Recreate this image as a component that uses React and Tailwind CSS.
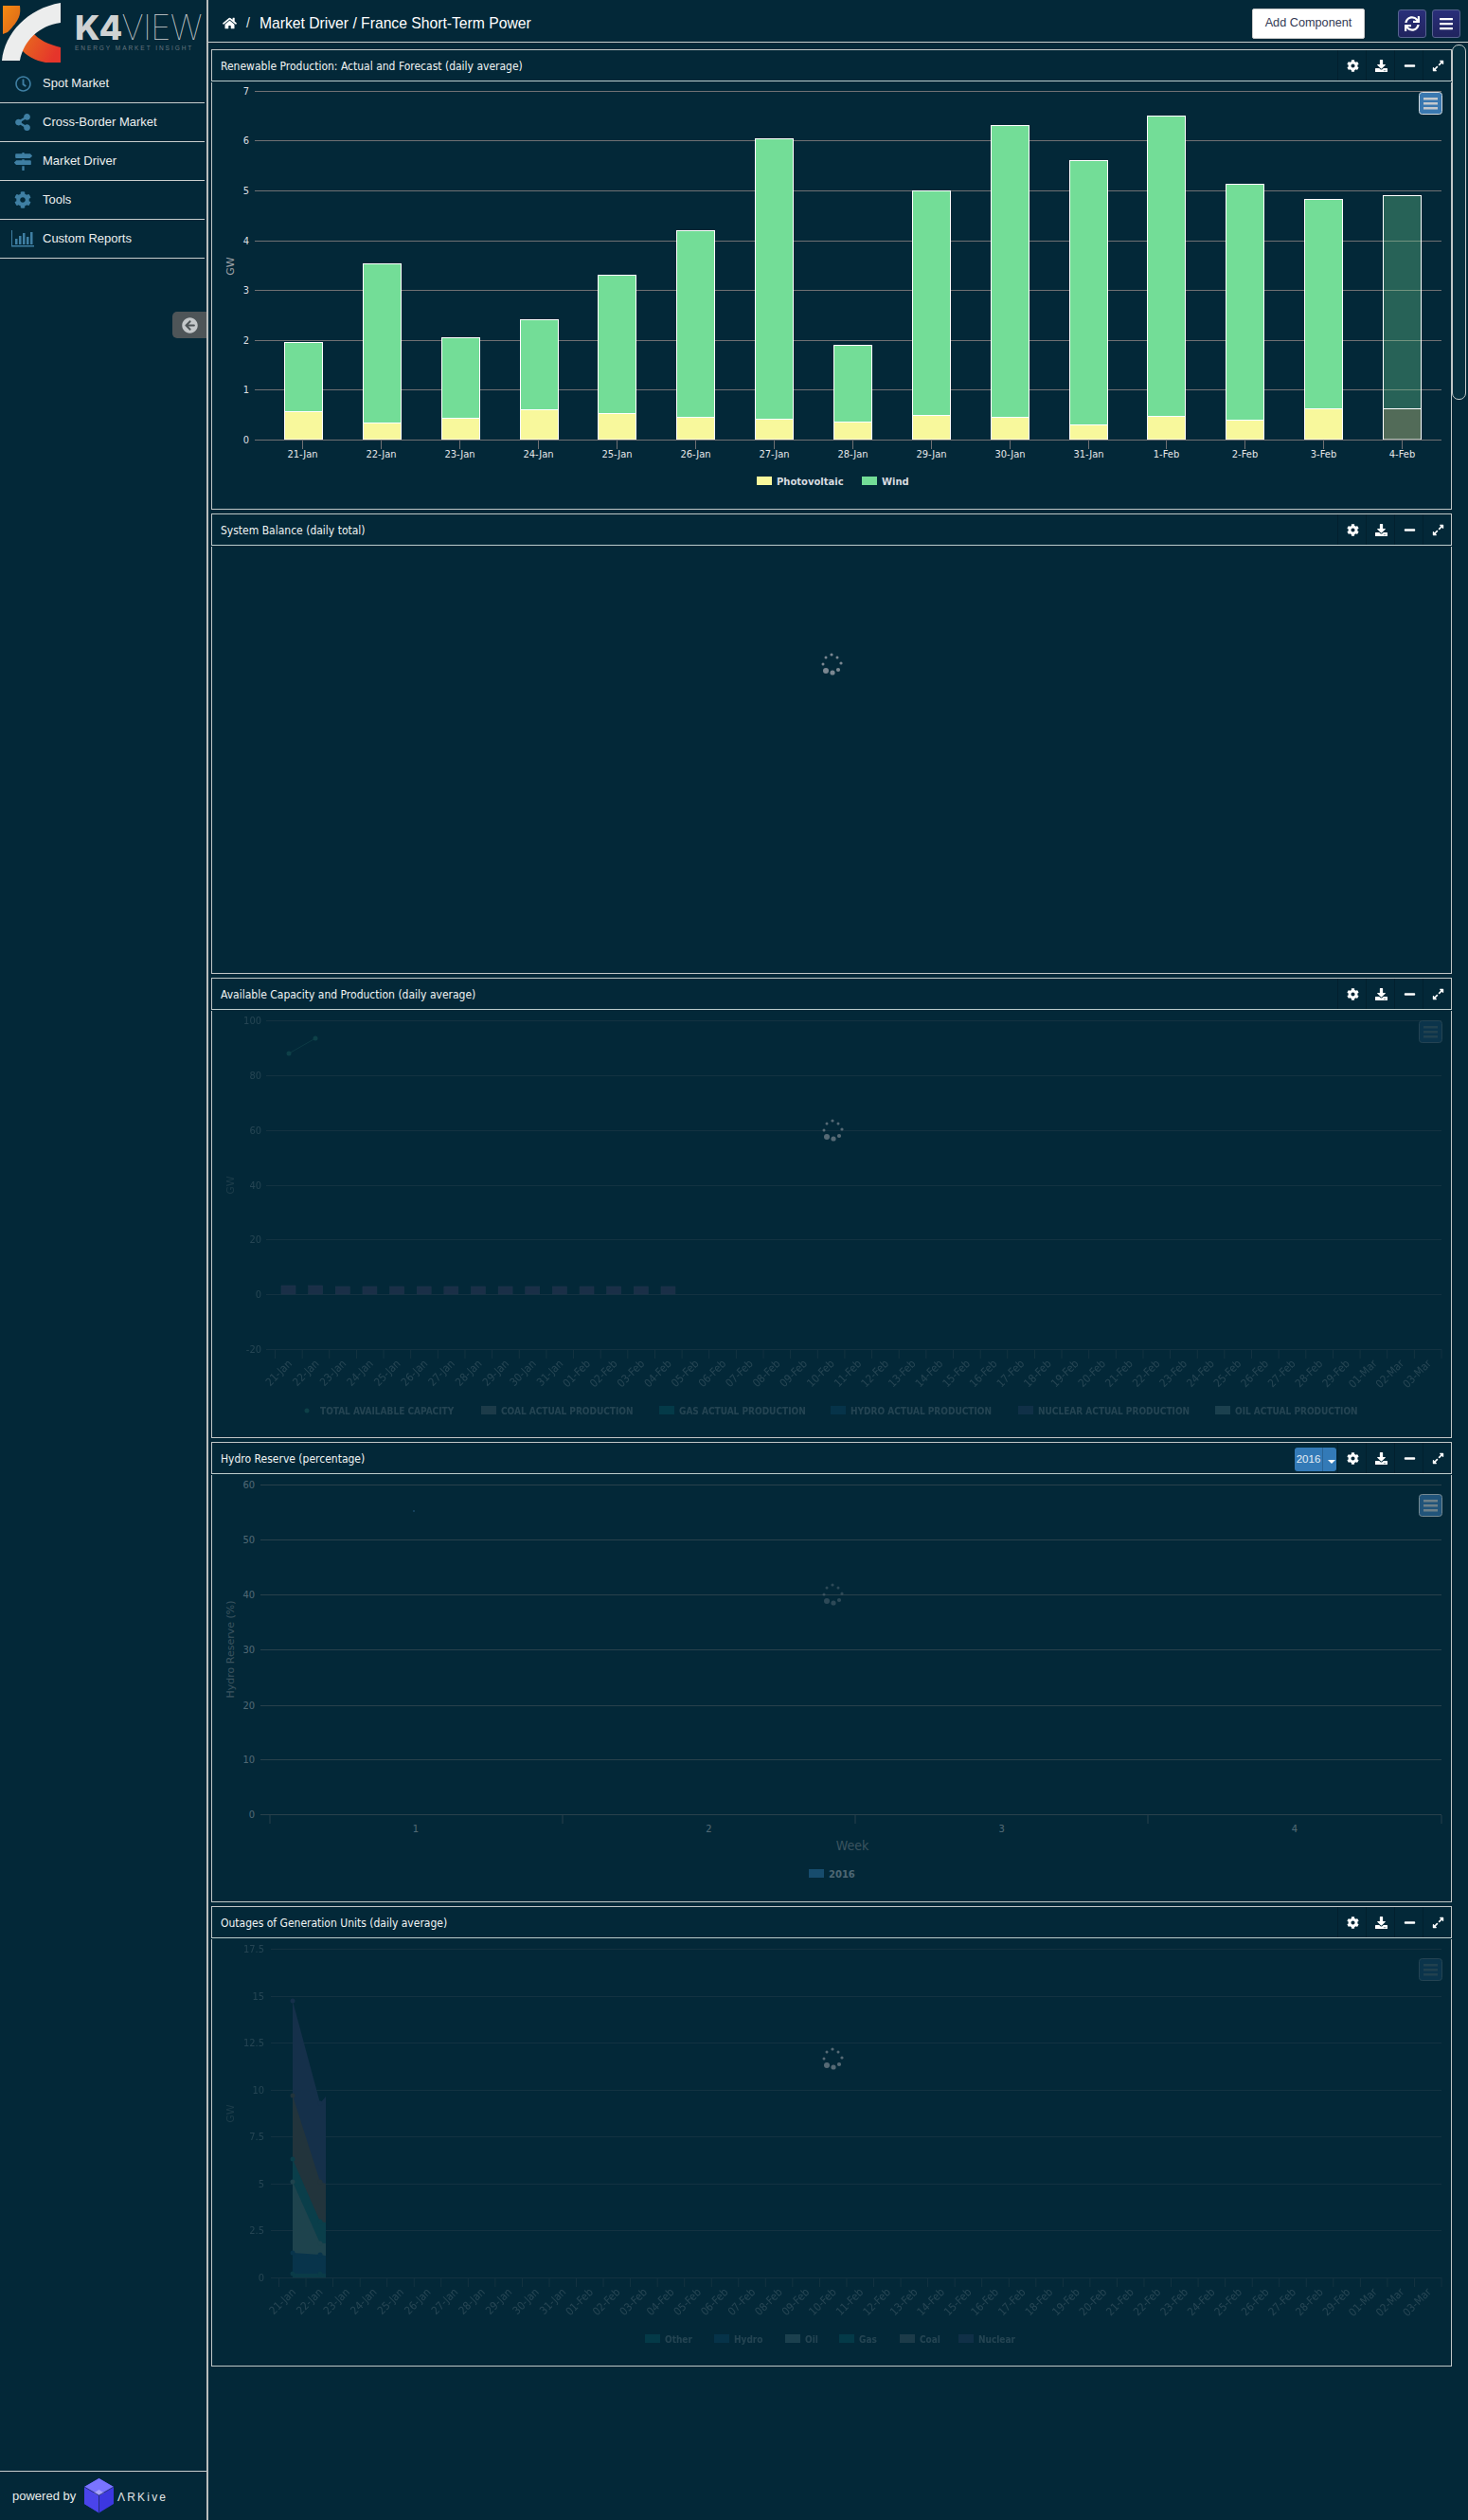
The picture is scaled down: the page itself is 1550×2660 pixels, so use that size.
import React from "react";
import {
  FaRegClock,
  FaShareAlt,
  FaMapSigns,
  FaCog,
  FaArrowCircleLeft,
  FaHome,
  FaSync,
  FaBars,
  FaDownload,
  FaMinus,
  FaExpandAlt,
} from "react-icons/fa";

const UI_FONT = '"Liberation Sans", Arial, sans-serif';
const CHART_FONT = '"DejaVu Sans Condensed", "DejaVu Sans", sans-serif';
const WIDE_FONT = '"DejaVu Sans", sans-serif';

const navItems = [
  { label: "Spot Market", icon: <FaRegClock className="text-[17px]" /> },
  { label: "Cross-Border Market", icon: <FaShareAlt className="text-[18px]" /> },
  { label: "Market Driver", icon: <FaMapSigns className="text-[19px]" /> },
  { label: "Tools", icon: <FaCog className="text-[18px]" /> },
  { label: "Custom Reports", icon: <ReportsIcon /> },
];

// Renewable chart data, GW
const renewable = [
  ["21-Jan", 1.95, 0.57],
  ["22-Jan", 3.53, 0.35],
  ["23-Jan", 2.05, 0.44],
  ["24-Jan", 2.42, 0.6],
  ["25-Jan", 3.3, 0.53],
  ["26-Jan", 4.2, 0.46],
  ["27-Jan", 6.05, 0.41],
  ["28-Jan", 1.9, 0.37],
  ["29-Jan", 5.0, 0.5],
  ["30-Jan", 6.32, 0.45],
  ["31-Jan", 5.6, 0.3],
  ["1-Feb", 6.5, 0.47],
  ["2-Feb", 5.13, 0.4],
  ["3-Feb", 4.83, 0.62],
  ["4-Feb", 4.9, 0.62],
];

const longDates = [];
for (let d = 21; d <= 31; d++) longDates.push(`${d}-Jan`);
for (let d = 1; d <= 29; d++) longDates.push(`${String(d).padStart(2, "0")}-Feb`);
for (let d = 1; d <= 3; d++) longDates.push(`0${d}-Mar`);

function ReportsIcon() {
  return (
    <svg width="24" height="18" viewBox="0 0 24 18" fill="currentColor">
      <path d="M0 0h1v16h23v1.500H0z" />
      <rect x="4" y="9" width="2.500" height="6" />
      <rect x="8" y="6" width="2.500" height="9" />
      <rect x="12" y="3" width="2.500" height="12" />
      <rect x="16" y="7" width="2.500" height="8" />
      <rect x="20" y="2" width="2.500" height="13" />
    </svg>
  );
}

function Logo() {
  return (
    <div className="flex h-[68px] items-start">
      <svg width="66" height="66" viewBox="0 0 66 66" className="mt-[1px] ml-[1px] shrink-0">
        <defs>
          <linearGradient id="orangeA" x1="0" y1="0" x2="1" y2="1">
            <stop offset="0" stopColor="#f58a12" />
            <stop offset="1" stopColor="#d9651a" />
          </linearGradient>
          <linearGradient id="orangeB" x1="0" y1="0" x2="1" y2="0.4">
            <stop offset="0" stopColor="#e8711d" />
            <stop offset="1" stopColor="#e5352b" />
          </linearGradient>
        </defs>
        <path d="M2 5 L20 5 C21 14 20 20 7 33 L2 35 Z" fill="url(#orangeA)" />
        <path d="M20 50 L33 33 C40 41 50 46 63 49 L63 65 L47 65 C36 63 27 58 20 50 Z" fill="url(#orangeB)" />
        <path d="M63 2 L63 23 C40 26 24 42 20 63 L1 63 C4 34 28 8 63 2 Z" fill="#eceded" />
      </svg>
      <div className="ml-[12px] mt-[11px] w-[136px]">
        <div className="flex h-[36px] items-center whitespace-nowrap text-[36px] leading-none text-[#cfd2d3]" style={{ fontFamily: "Inter, sans-serif" }}>
          <span className="font-extrabold tracking-[-1px]">K4</span>
          <span className="font-thin tracking-[-0.5px]">VIEW</span>
        </div>
        <div className="whitespace-nowrap text-[6.500px] leading-[8px] tracking-[1.950px] text-[#66757e]" style={{ fontFamily: UI_FONT }}>
          ENERGY MARKET INSIGHT
        </div>
      </div>
    </div>
  );
}

function ArkiveCube() {
  return (
    <svg width="33" height="37" viewBox="0 0 33 37">
      <path d="M16.500 0 L32 9 L32 27 L16.500 36.500 L1 27 L1 9 Z" fill="#3c37e0" />
      <path d="M16.500 0 L32 9 L16.500 18 L1 9 Z" fill="#7a74ff" />
      <path d="M1 9 L16.500 18 L16.500 36.500 L1 27 Z" fill="#4a44ea" />
      <path d="M16.500 12 L22 15.500 L16.500 18 L11 15.500 Z" fill="#a7a2ff" />
      <path d="M1 9 L16.500 18 L32 9 M16.500 18 V36" stroke="#1d2a60" strokeWidth="0.800" fill="none" />
    </svg>
  );
}

function Sidebar() {
  return (
    <aside className="relative flex w-[220px] shrink-0 flex-col border-r-2 border-[#b9bdbd]">
      <Logo />
      <nav className="w-[216px]">
        {navItems.map((item) => (
          <div key={item.label} className="flex h-[41px] items-center border-b border-[#c9cdcd] text-[13px] text-[#ecefef]">
            <span className="flex w-[45px] shrink-0 justify-center pl-[3px] text-[#3f7fa3]">{item.icon}</span>
            {item.label}
          </div>
        ))}
      </nav>
      <div className="absolute top-[329px] right-0 flex h-[28px] w-[36px] items-center justify-center rounded-l-[5px] bg-[#4e5558] text-[17px] text-[#c4c8ca]">
        <FaArrowCircleLeft />
      </div>
      <div className="mt-auto flex h-[52px] items-center border-t border-[#c9cdcd] pl-[13px] text-[13px] text-[#e8ecec]">
        <span className="w-[75px]">powered by</span>
        <ArkiveCube />
        <span className="ml-[3px] mt-[2px] text-[12px] tracking-[2.200px] text-[#e2e6e6]">ΛRKive</span>
      </div>
    </aside>
  );
}

function TopBar() {
  return (
    <header className="flex h-[45px] items-center border-b border-[#c9cdcd] pl-[15px] pt-[5px] text-white">
      <FaHome className="text-[15px]" />
      <span className="ml-[10px] text-[14px] text-[#dfe3e3]">/</span>
      <span className="ml-[10px] text-[15.700px]">Market Driver / France Short-Term Power</span>
      <button className="ml-auto flex h-[32px] w-[119px] items-center justify-center rounded-[2px] border border-[#ccc] bg-white text-[12.700px] text-[#333a55]">
        Add Component
      </button>
      <button className="ml-[35px] flex h-[30px] w-[30px] items-center justify-center rounded-[3px] border border-[#56638f] bg-gradient-to-b from-[#2a2f7a] to-[#20245e] text-[16px]">
        <FaSync />
      </button>
      <button className="ml-[6px] mr-[8px] flex h-[30px] w-[30px] items-center justify-center rounded-[3px] border border-[#56638f] bg-gradient-to-b from-[#2a2f7a] to-[#20245e] text-[16px]">
        <FaBars />
      </button>
    </header>
  );
}

function PanelTools({ year }) {
  const tools = [<FaCog key="c" />, <FaDownload key="d" />, <FaMinus key="m" />, <FaExpandAlt key="e" />];
  return (
    <div className="flex h-full items-center">
      {year && (
        <div className="mr-[1px] mt-[3px] flex h-[25px] w-[44px] items-center rounded-[3px] bg-[#337ab7] text-[11.500px] text-[#e6eef5]">
          <span className="w-[30px] border-r border-[#2a6496] text-center leading-[25px]">{year}</span>
          <span className="ml-[5px] mt-[4px] h-0 w-0 border-x-[4px] border-t-[4px] border-x-transparent border-t-white" />
        </div>
      )}
      {tools.map((t, i) => (
        <span key={i} className="flex h-full w-[30px] items-center justify-center border-l border-[#02202e] pl-[2px] text-[13px] text-white">
          {t}
        </span>
      ))}
    </div>
  );
}

function Panel({ title, year, children }) {
  return (
    <section className="w-[1310px]">
      <div className="flex h-[34px] items-center justify-between border border-[#c0c6c6] border-b-[#bccccc] pl-[9px]">
        <span className="pt-[2px] text-[12px] text-[#f1f4f4]" style={{ fontFamily: CHART_FONT }}>
          {title}
        </span>
        <PanelTools year={year} />
      </div>
      <div className="mt-[1px] h-[451px] border-x border-b border-[#c0c6c6]">{children}</div>
    </section>
  );
}

// spinner dots grow toward the bottom left, as in the loading gif
function Spinner({ cx, cy, opacity = 1 }) {
  const dots = [
    [-6, 8, 3],
    [1, 10, 2.6],
    [7, 7, 2.1],
    [10, 0, 1.6],
    [6, -6, 1.5],
    [0, -9, 1.6],
    [-6, -6, 1.5],
    [-9, 1, 1.5],
  ];
  return (
    <g fill="#7b8791" opacity={opacity}>
      {dots.map(([x, y, r], i) => (
        <circle key={i} cx={cx + x} cy={cy + y} r={r} />
      ))}
    </g>
  );
}

function MenuButton({ y, opacity = 1 }) {
  return (
    <g opacity={opacity}>
      <rect x="1498.500" y={y + 0.5} width="24" height="23" rx="3" fill="#3a78b0" stroke="#d5dadd" />
      <rect x="1503" y={y + 6} width="15" height="2.500" fill="#c4c8cc" />
      <rect x="1503" y={y + 11} width="15" height="2.500" fill="#c4c8cc" />
      <rect x="1503" y={y + 16} width="15" height="2.500" fill="#c4c8cc" />
    </g>
  );
}

function YAxis({ ticks, x0, xLabel, title, titleY }) {
  return (
    <g>
      {ticks.map(([label, y]) => (
        <g key={label}>
          <line x1={x0} x2="1522" y1={y + 0.5} y2={y + 0.5} stroke="#707073" />
          <text x={xLabel} y={y + 4} textAnchor="end" fontSize="11" fill="#dcdfe2">
            {label}
          </text>
        </g>
      ))}
      <text
        x="247"
        y={titleY}
        textAnchor="middle"
        fontSize="11"
        fontFamily={WIDE_FONT}
        fill="#a0a4a8"
        transform={`rotate(-90 247 ${titleY})`}
      >
        {title}
      </text>
    </g>
  );
}

function DateAxis({ y, x0 }) {
  const pitch = (1522 - x0) / 43;
  return (
    <g>
      {longDates.map((d, i) => {
        const lx = x0 + (i + 0.5) * pitch + 4;
        return (
          <g key={d}>
            <line x1={x0 + i * pitch} x2={x0 + i * pitch} y1={y} y2={y + 10} stroke="#707073" />
            <text x={lx} y={y + 16} textAnchor="end" fontSize="11.500" fill="#e0e0e3" transform={`rotate(-45 ${lx} ${y + 16})`}>
              {d}
            </text>
          </g>
        );
      })}
      <line x1="1522" x2="1522" y1={y} y2={y + 10} stroke="#707073" />
    </g>
  );
}

function Legend({ items, y, font = CHART_FONT, size = 10 }) {
  return (
    <g fontFamily={font} fontSize={size} fontWeight="700" fill="#d8dce0">
      {items.map(([label, x, color]) => (
        <g key={label}>
          <rect x={x} y={y - 5} width="16" height="9" fill={color} />
          <text x={x + 21} y={y + 3.5}>
            {label}
          </text>
        </g>
      ))}
    </g>
  );
}

function RenewableChart() {
  const base = 464;
  const unit = 52.6;
  const ys = [0, 1, 2, 3, 4, 5, 6, 7].map((v) => [String(v), Math.round(base - v * unit)]);
  return (
    <svg width="1308" height="450" viewBox="224 87 1308 450" className="block" fontFamily={CHART_FONT}>
      <YAxis ticks={ys} x0={269} xLabel={263} title="GW" titleY={281} />
      {renewable.map(([label, total, pv], i) => {
        const barX = Math.round(300 + i * 82.85) + 0.5;
        const tick = Math.round(319.2 + i * 82.93) + 0.5;
        const forecast = i === renewable.length - 1;
        const fillOpacity = forecast ? 0.32 : 1;
        const topY = Math.round(base - total * unit) + 0.5;
        const pvY = Math.round(base - pv * unit) + 0.5;
        return (
          <g key={label}>
            <rect x={barX} y={topY} width="40" height={pvY - topY} fill="#73dd97" fillOpacity={fillOpacity} stroke="#ffffff" />
            <rect x={barX} y={pvY} width="40" height={base - pvY} fill="#f8f89c" fillOpacity={fillOpacity} stroke="#ffffff" />
            <line x1={tick} x2={tick} y1={base} y2={base + 10} stroke="#707073" />
            <text x={tick} y={base + 19} textAnchor="middle" fontSize="11" fill="#e6e6e8">
              {label}
            </text>
          </g>
        );
      })}
      <line x1="269" x2="1522" y1={base + 0.5} y2={base + 0.5} stroke="#707073" />
      <Legend
        y={508}
        font={WIDE_FONT}
        items={[
          ["Photovoltaic", 799, "#f8f89c"],
          ["Wind", 910, "#73dd97"],
        ]}
      />
      <MenuButton y={97} />
    </svg>
  );
}

function SystemBalanceChart() {
  return (
    <svg width="1308" height="449" viewBox="224 577 1308 449" className="block">
      <Spinner cx={878} cy={700} />
    </svg>
  );
}

function CapacityChart() {
  const ys = [
    ["100", 1077],
    ["80", 1135],
    ["60", 1193],
    ["40", 1251],
    ["20", 1308],
    ["0", 1366],
    ["-20", 1424],
  ];
  const pitch = (1522 - 290.5) / 43;
  return (
    <svg width="1308" height="450" viewBox="224 1067 1308 450" className="block" fontFamily={CHART_FONT}>
      <g opacity="0.16">
        <YAxis ticks={ys} x0={281} xLabel={276} title="GW" titleY={1251} />
        <DateAxis y={1424} x0={290.5} />
        <Legend
          y={1489}
          items={[
            ["TOTAL AVAILABLE CAPACITY", 317, "transparent"],
            ["COAL ACTUAL PRODUCTION", 508, "#a6a6a6"],
            ["GAS ACTUAL PRODUCTION", 696, "#10a0a0"],
            ["HYDRO ACTUAL PRODUCTION", 877, "#1f74a8"],
            ["NUCLEAR ACTUAL PRODUCTION", 1075, "#5a5f9a"],
            ["OIL ACTUAL PRODUCTION", 1283, "#9fc2c2"],
          ]}
        />
        <MenuButton y={1077} />
      </g>
      {Array.from({ length: 15 }).map((_, i) => (
        <rect key={i} x={297 + i * pitch} y={i < 2 ? 1357 : 1358} width="15" height={i < 2 ? 9 : 8} fill="#1a2f47" stroke="#20374c" strokeWidth="0.500" />
      ))}
      <line x1="305" y1="1112" x2="333" y2="1096" stroke="#0d3a44" />
      <circle cx="305" cy="1112" r="2.500" fill="#0e4048" />
      <circle cx="333" cy="1096" r="2.500" fill="#0e4048" />
      <circle cx="324" cy="1489" r="2.500" fill="#0e4048" />
      <Spinner cx={879} cy={1192} opacity={0.7} />
    </svg>
  );
}

function HydroChart() {
  const ys = [
    ["60", 1567],
    ["50", 1625],
    ["40", 1683],
    ["30", 1741],
    ["20", 1800],
    ["10", 1857],
    ["0", 1915],
  ];
  return (
    <svg width="1308" height="450" viewBox="224 1557 1308 450" className="block" fontFamily={CHART_FONT}>
      <g opacity="0.35">
        <YAxis ticks={ys} x0={275} xLabel={269} title="Hydro Reserve (%)" titleY={1741} />
        {[285, 594, 903, 1212, 1522].map((x) => (
          <line key={x} x1={x} x2={x} y1="1916" y2="1925" stroke="#707073" />
        ))}
        {["1", "2", "3", "4"].map((l, i) => (
          <text key={l} x={439 + i * 309.3} y="1934" textAnchor="middle" fontSize="11" fill="#e0e0e3">
            {l}
          </text>
        ))}
        <text x="900" y="1953" textAnchor="middle" fontSize="14" fill="#a0a4a8">
          Week
        </text>
        <Legend y={1978} font={WIDE_FONT} items={[["2016", 854, "#3d8fd0"]]} />
      </g>
      <MenuButton y={1577} opacity={0.55} />
      <circle cx="437" cy="1595" r="1" fill="#1d4a68" />
      <Spinner cx={879} cy={1682} opacity={0.35} />
    </svg>
  );
}

function OutagesChart() {
  const ys = [
    ["17.5", 2057],
    ["15", 2107],
    ["12.5", 2156],
    ["10", 2206],
    ["7.5", 2255],
    ["5", 2305],
    ["2.5", 2354],
    ["0", 2404],
  ];
  // stacked areas, topmost first: [color, top at 21-Jan, top at 22-Jan, top at clip edge]
  const areas = [
    ["#15304a", 2112, 2220, 2213],
    ["#22343c", 2212, 2303, 2305],
    ["#0a3e4a", 2279, 2345, 2346],
    ["#1e434d", 2303, 2368, 2368],
    ["#08344b", 2378, 2380, 2381],
    ["#0a3b48", 2400, 2400, 2400],
  ];
  return (
    <svg width="1308" height="450" viewBox="224 2047 1308 450" className="block" fontFamily={CHART_FONT}>
      <g opacity="0.16">
        <YAxis ticks={ys} x0={286} xLabel={279} title="GW" titleY={2231} />
        <DateAxis y={2404} x0={294.5} />
        <Legend
          y={2469}
          items={[
            ["Other", 681, "#10a0a0"],
            ["Hydro", 754, "#1f74a8"],
            ["Oil", 829, "#9fc2c2"],
            ["Gas", 886, "#10a0a0"],
            ["Coal", 950, "#a6a6a6"],
            ["Nuclear", 1012, "#5a5f9a"],
          ]}
        />
        <MenuButton y={2067} />
      </g>
      {areas.map(([color, a, b, c]) => (
        <polygon key={color} points={`309,${a} 338,${b} 344,${c} 344,2404 309,2404`} fill={color} />
      ))}
      {areas.map(([color, a, b]) => (
        <g key={`m${color}`} fill={color}>
          <circle cx="309" cy={a} r="2.500" />
          <circle cx="338" cy={b} r="2.500" />
        </g>
      ))}
      <Spinner cx={879} cy={2172} opacity={0.7} />
    </svg>
  );
}

export default function App() {
  return (
    <div className="flex h-[2660px] w-[1550px] bg-[#032838]" style={{ fontFamily: UI_FONT }}>
      <Sidebar />
      <main className="relative min-w-0 flex-1">
        <TopBar />
        <div className="ml-[3px] mt-[7px] flex flex-col gap-[4px]">
          <Panel title="Renewable Production: Actual and Forecast (daily average)">
            <RenewableChart />
          </Panel>
          <Panel title="System Balance (daily total)">
            <SystemBalanceChart />
          </Panel>
          <Panel title="Available Capacity and Production (daily average)">
            <CapacityChart />
          </Panel>
          <Panel title="Hydro Reserve (percentage)" year="2016">
            <HydroChart />
          </Panel>
          <Panel title="Outages of Generation Units (daily average)">
            <OutagesChart />
          </Panel>
        </div>
        <div className="absolute top-[47px] right-[2px] h-[375px] w-[15px] rounded-[7px] border border-[#c4caca] bg-[#07303f]" />
      </main>
    </div>
  );
}
